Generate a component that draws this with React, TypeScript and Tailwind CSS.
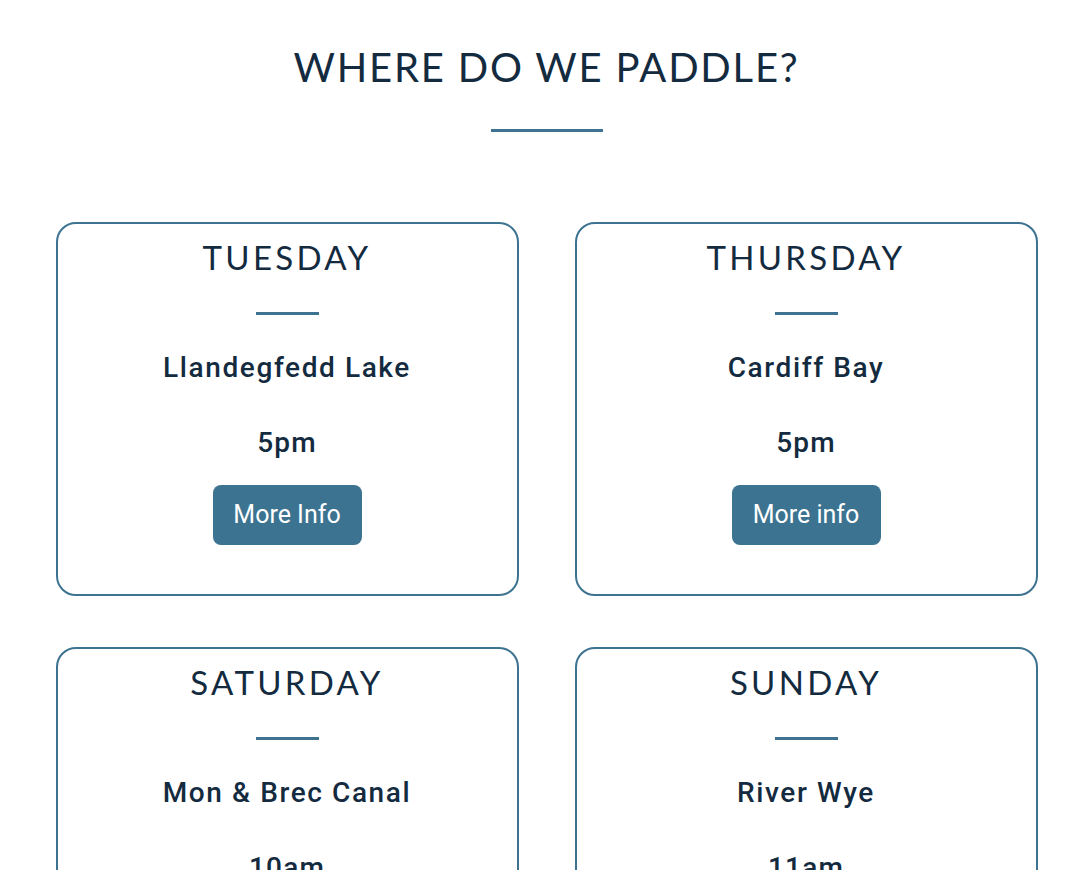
import React from "react";

interface DayCardProps {
  day: string;
  place: string;
  time: string;
  buttonText: string;
}

const DayCard: React.FC<DayCardProps> = ({ day, place, time, buttonText }) => {
  return (
    <div className="flex h-[374px] flex-col items-center rounded-[20px] border-2 border-[#3d7391] bg-white pt-[13px]">
      <h3 className="font-['Lato'] text-[33px] font-normal leading-[40px] tracking-[3.3px] text-[#142b3f]">
        {day}
      </h3>
      <div className="mt-[35px] h-[3px] w-[63px] bg-[#3d7391]" />
      <p className="mt-[35px] font-['Roboto'] text-[28px] font-medium leading-[36px] tracking-[1.6px] text-[#142b3f]">
        {place}
      </p>
      <p className="mt-[39px] font-['Roboto'] text-[28px] font-medium leading-[36px] tracking-[1.2px] text-[#142b3f]">
        {time}
      </p>
      <a
        href="#"
        className="mt-[24px] flex h-[60px] w-[149px] items-center justify-center rounded-[8px] bg-[#3c7391] font-['Roboto'] text-[25px] text-white"
      >
        {buttonText}
      </a>
    </div>
  );
};

const days: DayCardProps[] = [
  { day: "TUESDAY", place: "Llandegfedd Lake", time: "5pm", buttonText: "More Info" },
  { day: "THURSDAY", place: "Cardiff Bay", time: "5pm", buttonText: "More info" },
  { day: "SATURDAY", place: "Mon & Brec Canal", time: "10am", buttonText: "More Info" },
  { day: "SUNDAY", place: "River Wye", time: "11am", buttonText: "More info" },
];

export default function App() {
  return (
    <div className="min-h-screen bg-white pl-[8px]">
      <section className="flex flex-col items-center pt-[42px]">
        <h2 className="font-['Lato'] text-[40px] font-normal leading-[50px] tracking-[1.8px] text-[#142b3f]">
          WHERE DO WE PADDLE?
        </h2>
        <div className="mt-[37px] h-[3px] w-[112px] bg-[#3d7391]" />
      </section>
      <div className="mt-[90px] grid grid-cols-[463px_463px] justify-center gap-x-[56px] gap-y-[51px] pb-10">
        {days.map((d) => (
          <DayCard key={d.day} {...d} />
        ))}
      </div>
    </div>
  );
}
